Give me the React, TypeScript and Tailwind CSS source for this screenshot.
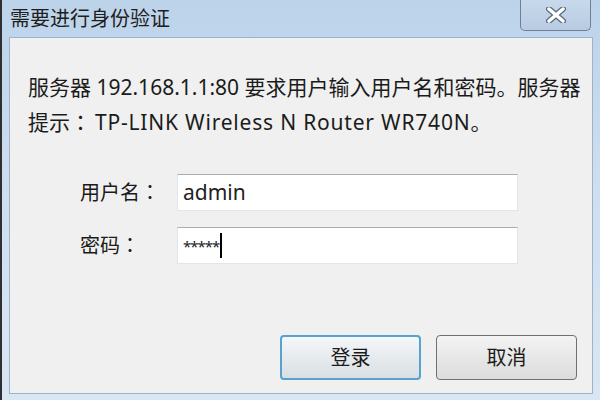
import React from "react";

const font = { fontFamily: '"Noto Sans", "Noto Sans CJK SC", sans-serif' };
const tcColon = { fontFamily: '"Noto Sans CJK TC", sans-serif' };

const CloseGlyph = () => (
  <svg width="22" height="16" viewBox="0 0 22 16">
    <path
      d="M4 2 L18 14 M18 2 L4 14"
      stroke="#5b6b80"
      strokeWidth="6"
      strokeLinecap="round"
    />
    <path
      d="M4 2 L18 14 M18 2 L4 14"
      stroke="#ffffff"
      strokeWidth="3.5"
      strokeLinecap="round"
    />
  </svg>
);

const Field = ({ label, value, caret }: { label: string; value: string; caret?: boolean }) => (
  <div className="flex items-center">
    <span className="w-[167px] shrink-0 pl-[70px] text-[20px] text-[#1b1b1b] whitespace-nowrap">
      {label}
      <span style={tcColon}>：</span>
    </span>
    <div className="flex h-[37px] w-[341px] items-center border border-[#e2e6eb] border-t-[#a9acb2] bg-white pl-[5px] text-[21px] text-[#222]">
      <span className={caret ? "pt-[2px] text-[15px] tracking-[-1px]" : ""}>{value}</span>
      {caret && <span className="ml-[1px] h-[25px] w-[2px] bg-black" />}
    </div>
  </div>
);

const App = () => {
  return (
    <div className="h-[400px] w-[600px] overflow-hidden bg-[#2d2f33] pl-[2px]" style={font}>
      <div className="flex h-full flex-col bg-gradient-to-b from-[#bcd3ea] via-[#cfdff0] to-[#d9e6f4] px-[7px] pb-[6px]">
        <div className="flex h-[37px] items-start justify-between">
          <span className="pl-[1px] pt-[6px] text-[20px] leading-[26px] text-[#1e1e1e]">需要进行身份验证</span>
          <div className="mr-[2px] flex h-[31px] w-[71px] items-center justify-center rounded-b-[5px] border border-t-0 border-[#6f7f95] bg-gradient-to-b from-[#c8d9ec] to-[#b7cbe2]">
            <CloseGlyph />
          </div>
        </div>
        <div className="flex flex-1 flex-col border border-[#9fb2c9] bg-[#f0f0f0]">
          <div className="pl-[18px] pt-[32px] text-[21px] leading-[34px] text-[#1b1b1b]">
            <div className="whitespace-nowrap">服务器 192.168.1.1:80 要求用户输入用户名和密码。服务器</div>
            <div className="whitespace-nowrap">
              提示<span className="mr-[4px]" style={tcColon}>：</span>
              <span className="tracking-[0.8px]">TP-LINK Wireless N Router WR740N</span>。
            </div>
          </div>
          <div className="mt-[35px] flex flex-col gap-[16px]">
            <Field label="用户名" value="admin" />
            <Field label="密码" value="*****" caret />
          </div>
          <div className="mt-auto mb-[13px] flex justify-end gap-[15px] pr-[15px]">
            <button className="h-[45px] w-[141px] rounded-[4px] border-2 border-[#57a3cc] bg-gradient-to-b from-[#f4f7f9] to-[#d9dfe3] text-[20px] text-[#1b1b1b]">
              登录
            </button>
            <button className="h-[45px] w-[141px] rounded-[4px] border border-[#707070] bg-gradient-to-b from-[#f3f3f3] to-[#dcdcdc] text-[20px] text-[#1b1b1b]">
              取消
            </button>
          </div>
        </div>
      </div>
    </div>
  );
};

export default App;
